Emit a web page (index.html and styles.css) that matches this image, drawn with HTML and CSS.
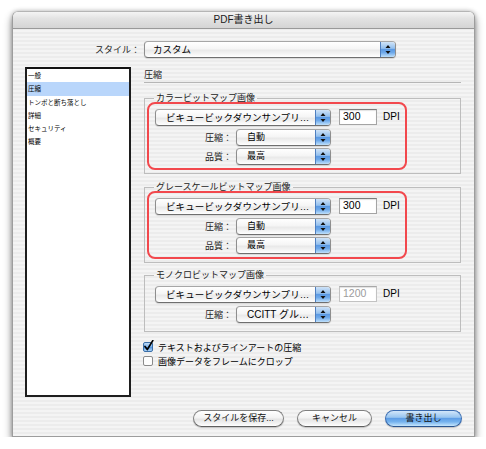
FILE: index.html
```html
<!DOCTYPE html>
<html lang="ja">
<head>
<meta charset="utf-8">
<title>PDF書き出し</title>
<link rel="stylesheet" href="styles.css">
</head>
<body>
<div class="window">
  <div class="titlebar">PDF書き出し</div>
  <div class="body">
    <div class="style-row">
      <span class="style-label">スタイル：</span>
      <div class="popup popup-style"><span class="popup-text">カスタム</span><span class="arrows"><svg width="14" height="15" viewBox="0 0 14 15"><path d="M4.5 6 L7 3 L9.5 6 Z M4.5 9 L7 12 L9.5 9 Z" fill="#111"/></svg></span></div>
    </div>
    <div class="main">
      <ul class="list">
        <li>一般</li>
        <li class="selected">圧縮</li>
        <li>トンボと断ち落とし</li>
        <li>詳細</li>
        <li>セキュリティ</li>
        <li>概要</li>
      </ul>
      <div class="pane">
        <div class="pane-heading">圧縮</div>

        <fieldset class="group">
          <legend>カラービットマップ画像</legend>
          <div class="highlight">
            <div class="row">
              <div class="popup popup-wide"><span class="popup-text">ビキュービックダウンサンプリ…</span><span class="arrows"><svg width="14" height="15" viewBox="0 0 14 15"><path d="M4.5 6 L7 3 L9.5 6 Z M4.5 9 L7 12 L9.5 9 Z" fill="#111"/></svg></span></div>
              <div class="field">300</div>
              <span class="unit">DPI</span>
            </div>
            <div class="row row-gap3">
              <span class="row-label">圧縮：</span>
              <div class="popup popup-narrow"><span class="popup-text">自動</span><span class="arrows"><svg width="14" height="15" viewBox="0 0 14 15"><path d="M4.5 6 L7 3 L9.5 6 Z M4.5 9 L7 12 L9.5 9 Z" fill="#111"/></svg></span></div>
            </div>
            <div class="row row-gap2">
              <span class="row-label">品質：</span>
              <div class="popup popup-narrow"><span class="popup-text">最高</span><span class="arrows"><svg width="14" height="15" viewBox="0 0 14 15"><path d="M4.5 6 L7 3 L9.5 6 Z M4.5 9 L7 12 L9.5 9 Z" fill="#111"/></svg></span></div>
            </div>
          </div>
        </fieldset>

        <fieldset class="group group-2">
          <legend>グレースケールビットマップ画像</legend>
          <div class="highlight">
            <div class="row">
              <div class="popup popup-wide"><span class="popup-text">ビキュービックダウンサンプリ…</span><span class="arrows"><svg width="14" height="15" viewBox="0 0 14 15"><path d="M4.5 6 L7 3 L9.5 6 Z M4.5 9 L7 12 L9.5 9 Z" fill="#111"/></svg></span></div>
              <div class="field">300</div>
              <span class="unit">DPI</span>
            </div>
            <div class="row row-gap3">
              <span class="row-label">圧縮：</span>
              <div class="popup popup-narrow"><span class="popup-text">自動</span><span class="arrows"><svg width="14" height="15" viewBox="0 0 14 15"><path d="M4.5 6 L7 3 L9.5 6 Z M4.5 9 L7 12 L9.5 9 Z" fill="#111"/></svg></span></div>
            </div>
            <div class="row row-gap2">
              <span class="row-label">品質：</span>
              <div class="popup popup-narrow"><span class="popup-text">最高</span><span class="arrows"><svg width="14" height="15" viewBox="0 0 14 15"><path d="M4.5 6 L7 3 L9.5 6 Z M4.5 9 L7 12 L9.5 9 Z" fill="#111"/></svg></span></div>
            </div>
          </div>
        </fieldset>

        <fieldset class="group group-3">
          <legend>モノクロビットマップ画像</legend>
          <div class="plain">
            <div class="row">
              <div class="popup popup-wide"><span class="popup-text">ビキュービックダウンサンプリ…</span><span class="arrows"><svg width="14" height="15" viewBox="0 0 14 15"><path d="M4.5 6 L7 3 L9.5 6 Z M4.5 9 L7 12 L9.5 9 Z" fill="#111"/></svg></span></div>
              <div class="field field-disabled">1200</div>
              <span class="unit">DPI</span>
            </div>
            <div class="row row-gap3">
              <span class="row-label">圧縮：</span>
              <div class="popup popup-narrow"><span class="popup-text popup-latin">CCITT グル…</span><span class="arrows"><svg width="14" height="15" viewBox="0 0 14 15"><path d="M4.5 6 L7 3 L9.5 6 Z M4.5 9 L7 12 L9.5 9 Z" fill="#111"/></svg></span></div>
            </div>
          </div>
        </fieldset>

        <div class="checks">
          <div class="check-row">
            <svg class="checkbox" width="11" height="12" viewBox="0 0 11 12">
              <defs>
                <linearGradient id="cb" x1="0" y1="0" x2="0" y2="1">
                  <stop offset="0" stop-color="#c6dff7"/>
                  <stop offset="0.45" stop-color="#7fb4ec"/>
                  <stop offset="0.5" stop-color="#4f92e0"/>
                  <stop offset="1" stop-color="#b6dcfb"/>
                </linearGradient>
              </defs>
              <rect x="0.5" y="2.5" width="9" height="9" rx="1.5" fill="url(#cb)" stroke="#3a6ea8"/>
              <path d="M2 6.5 L4.3 9.5 L9.8 0.6" fill="none" stroke="#000" stroke-width="1.7" stroke-linecap="round" stroke-linejoin="round"/>
            </svg>
            <span>テキストおよびラインアートの圧縮</span>
          </div>
          <div class="check-row">
            <svg class="checkbox" width="11" height="12" viewBox="0 0 11 12">
              <rect x="0.5" y="2.5" width="9" height="9" rx="1.5" fill="#fdfdfd" stroke="#8a8a8a"/>
            </svg>
            <span>画像データをフレームにクロップ</span>
          </div>
        </div>
      </div>
    </div>
    <div class="buttons">
      <button class="btn btn-save">スタイルを保存...</button>
      <button class="btn btn-cancel">キャンセル</button>
      <button class="btn btn-default">書き出し</button>
    </div>
  </div>
</div>
</body>
</html>
```

FILE: styles.css
```css
* { box-sizing: border-box; }

html, body {
  margin: 0;
  padding: 0;
  background: #ffffff;
  font-family: "Liberation Sans", "Noto Sans CJK JP", sans-serif;
  font-size: 9px;
  color: #000;
}

.window {
  margin: 11px 0 0 12px;
  width: 463px;
  height: 426px;
  border-radius: 6px 6px 0 0;
  border: 1px solid #9d9d9d;
  border-top-color: #b5b5b5;
  background: repeating-linear-gradient(to bottom, #ececec 0, #ececec 2px, #f4f4f4 2px, #f4f4f4 4px);
  box-shadow: 0 5px 9px rgba(0, 0, 0, 0.45), 0 0 4px rgba(0, 0, 0, 0.25);
  overflow: hidden;
}

.titlebar {
  height: 17px;
  line-height: 16px;
  text-align: center;
  font-size: 10px;
  color: #1a1a1a;
  background: linear-gradient(to bottom, #f4f4f4 0, #e3e3e3 40%, #d4d4d4 100%);
  border-bottom: 1px solid #999;
}

.body {
  padding: 12px 13px 0 12px;
}

.style-row {
  display: flex;
  align-items: center;
  height: 17px;
}

.style-label {
  width: 115px;
  text-align: right;
  color: #222;
  margin-right: 4px;
}

.popup {
  display: flex;
  height: 17px;
  border: 1px solid #8e8e8e;
  border-top-color: #a6a6a6;
  border-bottom-color: #6f6f6f;
  border-radius: 4px;
  background: linear-gradient(to bottom, #ffffff 0, #f5f5f5 45%, #e9e9e9 55%, #f7f7f7 85%, #ffffff 100%);
  box-shadow: 0 1px 1px rgba(0, 0, 0, 0.12);
  overflow: hidden;
}

.popup-text {
  flex: 1;
  line-height: 15px;
  padding-left: 10px;
  white-space: nowrap;
  overflow: hidden;
}

.popup-style { width: 252px; }
.popup-style .popup-text { font-size: 9.5px; padding-left: 8px; }
.popup-wide { width: 176px; }
.popup-wide .popup-text { font-size: 9.5px; letter-spacing: 0.1px; }
.popup-narrow { width: 95px; }
.popup-latin { font-size: 10px; }

.arrows {
  width: 15px;
  display: flex;
  align-items: center;
  justify-content: center;
  border-left: 1px solid #4f7fbf;
  background: linear-gradient(to bottom, #cfe3f8 0, #94c0ee 42%, #5c9ae3 50%, #6ea9ea 70%, #bfe0fb 100%);
}

.main {
  display: grid;
  grid-template-columns: 106px 317px;
  column-gap: 13px;
  height: 330px;
  margin-top: 9px;
}

.list {
  list-style: none;
  margin: 0;
  padding: 0;
  background: #fff;
  border: 2px solid #1e1e1e;
  border-top-color: #111;
  font-size: 6.5px;
}

.list li {
  height: 13.3px;
  line-height: 13.3px;
  padding-left: 1px;
  white-space: nowrap;
}

.list li.selected {
  background: #b9d6fb;
}

.pane {
  display: flex;
  flex-direction: column;
}

.pane-heading {
  padding-top: 2px;
  line-height: 13px;
  border-bottom: 1px solid #b6b6b6;
  color: #222;
}

.group {
  margin: 11px 0 0 0;
  padding: 0 3px 3px 2px;
  border: 1px solid #bdbdbd;
  min-width: 0;
}

.group legend {
  padding: 0 2px;
  margin-left: 7px;
  line-height: 8px;
  color: #222;
}

.group-2 { margin-top: 9px; }
.group-3 { margin-top: 8px; }

.highlight,
.plain {
  width: 260px;
  border: 2px solid #f2484d;
  border-radius: 8px;
  padding: 5px 0 3px 6px;
}

.plain {
  border-color: transparent;
}

.row {
  display: flex;
  align-items: center;
  height: 17px;
}

.row-gap3 { margin-top: 3px; }
.row-gap2 { margin-top: 2px; }

.row-label {
  width: 77px;
  margin-right: 4px;
  text-align: right;
  color: #222;
}

.field {
  width: 38px;
  height: 16px;
  margin-left: 8px;
  align-self: flex-start;
  background: #fff;
  border: 1px solid #a4a4a4;
  border-top-color: #7b7b7b;
  box-shadow: inset 0 1px 1px rgba(0, 0, 0, 0.12);
  font-size: 10.5px;
  line-height: 13px;
  padding-left: 3px;
}

.field-disabled {
  color: #9c9c9c;
  border-color: #c2c2c2;
  border-top-color: #a8a8a8;
}

.unit {
  margin-left: 6px;
  font-size: 10px;
  align-self: flex-start;
  line-height: 16px;
}

.checks {
  margin-top: 8px;
  display: flex;
  flex-direction: column;
}

.check-row {
  display: flex;
  align-items: center;
  height: 14px;
  margin-left: -1px;
}

.checkbox {
  margin-right: 4px;
  margin-top: -2px;
}

.buttons {
  display: flex;
  justify-content: flex-end;
  gap: 13px;
  margin-top: 13px;
  margin-right: -1px;
}

.btn {
  height: 17px;
  padding: 0;
  border: 1px solid #808080;
  border-bottom-color: #5e5e5e;
  border-radius: 9px;
  background: linear-gradient(to bottom, #ffffff 0, #f3f3f3 45%, #e4e4e4 55%, #f4f4f4 85%, #ffffff 100%);
  box-shadow: 0 1px 1px rgba(0, 0, 0, 0.2);
  font-family: "Liberation Sans", "Noto Sans CJK JP", sans-serif;
  font-size: 9px;
  line-height: 15px;
  color: #111;
}

.btn-save { width: 91px; }
.btn-cancel { width: 75px; }
.btn-default {
  width: 77px;
  border-color: #3b6cb0;
  border-bottom-color: #2a5590;
  background: linear-gradient(to bottom, #d2e6fa 0, #98c5f0 42%, #5f9ee6 50%, #74b2ee 72%, #c6e6fd 100%);
}
```
